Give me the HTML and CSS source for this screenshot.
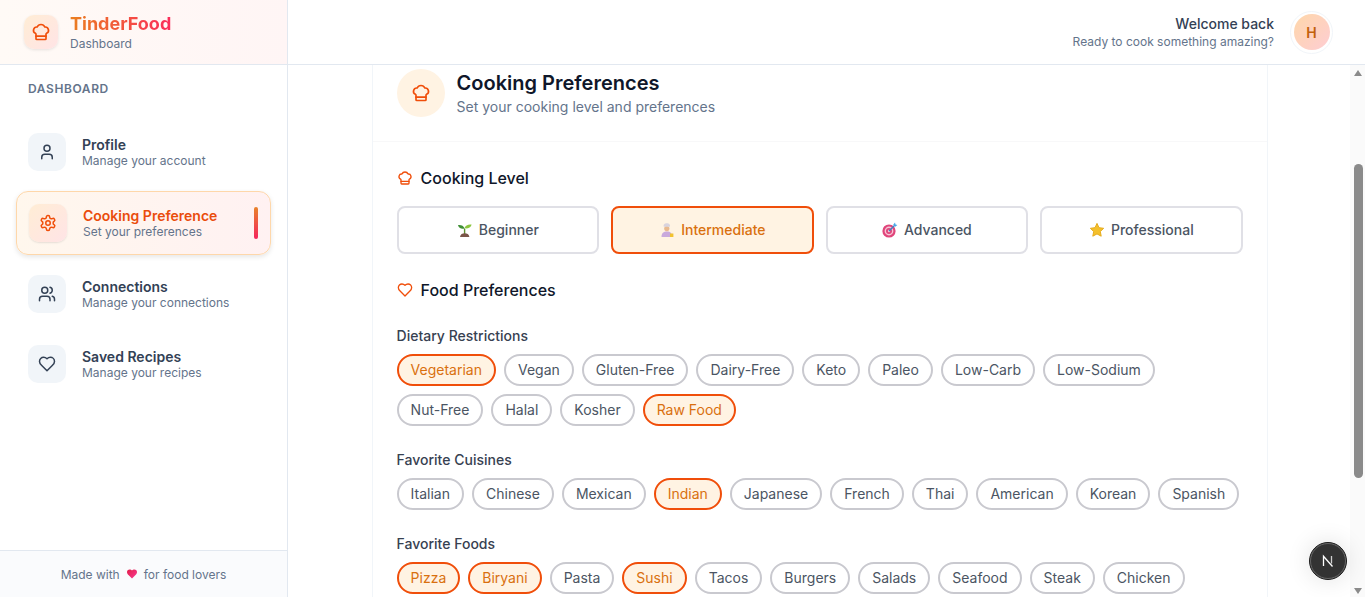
FILE: index.html
```html
<!DOCTYPE html>
<html lang="en">
<head>
<meta charset="utf-8">
<title>TinderFood Dashboard</title>
<link rel="stylesheet" href="styles.css">
</head>
<body>
<svg class="sprite" width="0" height="0" aria-hidden="true">
  <defs>
    <linearGradient id="g-heart" x1="0" y1="0" x2="1" y2="1"><stop offset="0" stop-color="#e11d48"/><stop offset="1" stop-color="#fb3b95"/></linearGradient>
  </defs>
  <symbol id="i-hat" viewBox="0 0 24 24"><path d="M17 21a1 1 0 0 0 1-1v-5.35c0-.457.316-.844.727-1.041a4 4 0 0 0-2.134-7.589 5 5 0 0 0-9.186 0 4 4 0 0 0-2.134 7.588c.411.198.727.585.727 1.041V20a1 1 0 0 0 1 1Z"/><path d="M6 17h12"/></symbol>
  <symbol id="i-user" viewBox="0 0 24 24"><path d="M19 21v-2a4 4 0 0 0-4-4H9a4 4 0 0 0-4 4v2"/><circle cx="12" cy="7" r="4"/></symbol>
  <symbol id="i-users" viewBox="0 0 24 24"><path d="M16 21v-2a4 4 0 0 0-4-4H6a4 4 0 0 0-4 4v2"/><circle cx="9" cy="7" r="4"/><path d="M22 21v-2a4 4 0 0 0-3-3.87"/><path d="M16 3.13a4 4 0 0 1 0 7.75"/></symbol>
  <symbol id="i-heart" viewBox="0 0 24 24"><path d="M19 14c1.49-1.46 3-3.21 3-5.5A5.5 5.5 0 0 0 16.5 3c-1.76 0-3 .5-4.5 2-1.5-1.5-2.74-2-4.5-2A5.5 5.5 0 0 0 2 8.5c0 2.3 1.5 4.05 3 5.5l7 7Z"/></symbol>
  <symbol id="i-gear" viewBox="0 0 24 24"><path d="M12.22 2h-.44a2 2 0 0 0-2 2v.18a2 2 0 0 1-1 1.73l-.43.25a2 2 0 0 1-2 0l-.15-.08a2 2 0 0 0-2.73.73l-.22.38a2 2 0 0 0 .73 2.73l.15.1a2 2 0 0 1 1 1.72v.51a2 2 0 0 1-1 1.74l-.15.09a2 2 0 0 0-.73 2.73l.22.38a2 2 0 0 0 2.73.73l.15-.08a2 2 0 0 1 2 0l.43.25a2 2 0 0 1 1 1.73V20a2 2 0 0 0 2 2h.44a2 2 0 0 0 2-2v-.18a2 2 0 0 1 1-1.73l.43-.25a2 2 0 0 1 2 0l.15.08a2 2 0 0 0 2.73-.73l.22-.39a2 2 0 0 0-.73-2.73l-.15-.08a2 2 0 0 1-1-1.74v-.5a2 2 0 0 1 1-1.74l.15-.09a2 2 0 0 0 .73-2.73l-.22-.38a2 2 0 0 0-2.73-.73l-.15.08a2 2 0 0 1-2 0l-.43-.25a2 2 0 0 1-1-1.73V4a2 2 0 0 0-2-2z"/><circle cx="12" cy="12" r="3"/></symbol>
</svg>
<div class="app">
  <aside class="sidebar">
    <div class="brand">
      <div class="brand-icon"><svg class="ic ic-20 orange"><use href="#i-hat"/></svg></div>
      <div>
        <div class="brand-name">TinderFood</div>
        <div class="brand-sub">Dashboard</div>
      </div>
    </div>
    <div class="nav-title">DASHBOARD</div>
    <nav class="nav">
      <a class="nav-item">
        <span class="nav-icon"><svg class="ic ic-18 slate"><use href="#i-user"/></svg></span>
        <span class="nav-text"><b>Profile</b><small>Manage your account</small></span>
      </a>
      <a class="nav-item active">
        <span class="nav-icon"><svg class="ic ic-18 orange"><use href="#i-gear"/></svg></span>
        <span class="nav-text"><b>Cooking Preference</b><small>Set your preferences</small></span>
        <span class="nav-bar"></span>
      </a>
      <a class="nav-item">
        <span class="nav-icon"><svg class="ic ic-18 slate"><use href="#i-users"/></svg></span>
        <span class="nav-text"><b>Connections</b><small>Manage your connections</small></span>
      </a>
      <a class="nav-item">
        <span class="nav-icon"><svg class="ic ic-18 slate"><use href="#i-heart"/></svg></span>
        <span class="nav-text"><b>Saved Recipes</b><small>Manage your recipes</small></span>
      </a>
    </nav>
    <div class="side-foot">Made with <svg class="foot-heart" viewBox="0 0 24 24"><path fill="url(#g-heart)" d="M19 14c1.49-1.46 3-3.21 3-5.5A5.5 5.5 0 0 0 16.5 3c-1.76 0-3 .5-4.5 2-1.5-1.5-2.74-2-4.5-2A5.5 5.5 0 0 0 2 8.5c0 2.3 1.5 4.05 3 5.5l7 7Z"/></svg> for food lovers</div>
  </aside>
  <div class="right">
    <header class="topbar">
      <div class="welcome">
        <div class="welcome-1">Welcome back</div>
        <div class="welcome-2">Ready to cook something amazing?</div>
      </div>
      <div class="avatar"><span>H</span></div>
    </header>
    <div class="content">
      <main class="main">
        <section class="card">
          <div class="card-head">
            <div class="head-icon"><svg class="ic ic-20 orange"><use href="#i-hat"/></svg></div>
            <div>
              <h1>Cooking Preferences</h1>
              <p>Set your cooking level and preferences</p>
            </div>
          </div>
          <div class="card-body">
            <h2><svg class="ic ic-16 orange"><use href="#i-hat"/></svg>Cooking Level</h2>
            <div class="levels">
              <button class="level">
                <svg class="emoji" viewBox="0 0 16 16"><path d="M7.6 13V6.5" stroke="#5d8f2f" stroke-width="1.4" fill="none"/><path d="M7.6 6.5C6.6 3.6 4 2.6 1 3c.4 2.8 3.4 4.6 6.6 3.5z" fill="#3f8f35"/><path d="M7.6 6C8.4 3.4 11 2.2 14.6 2.6c-.5 3-3.6 4.6-7 3.4z" fill="#8cc63f"/><path d="M3 15c.4-2.8 2.4-3.8 4.700-3.800s4.300 1 4.700 3.800z" fill="#7a5548"/></svg>
                Beginner
              </button>
              <button class="level on">
                <svg class="emoji" viewBox="0 0 16 16"><path d="M2.5 15c0-4 2-5.5 5.500-5.500S13 11 13 15z" fill="#c9a9dc"/><circle cx="7.800" cy="6.600" r="2.600" fill="#e9b98f"/><path d="M4.800 4.800C4 2.600 5.600 1.200 7.800 1.200s3.800 1.400 3 3.600z" fill="#d9d3de"/><rect x="11" y="11.500" width="3.400" height="3.500" fill="#f2c230"/></svg>
                Intermediate
              </button>
              <button class="level">
                <svg class="emoji" viewBox="0 0 16 16"><circle cx="7" cy="9" r="6.600" fill="#e0457b"/><circle cx="7" cy="9" r="4.400" fill="#f7c6d6"/><circle cx="7" cy="9" r="3" fill="#e0457b"/><circle cx="7" cy="9" r="1.200" fill="#f7c6d6"/><path d="M7 9l6-6" stroke="#3b82c4" stroke-width="1.300"/><path d="M11.200 2.800L13 .6l.5 1.900 1.900.5-2.200 1.800z" fill="#4aa8e8"/></svg>
                Advanced
              </button>
              <button class="level">
                <svg class="emoji" viewBox="0 0 16 16"><path d="M8 1.400l2 4.300 4.700.6-3.400 3.200.9 4.700L8 11.900l-4.200 2.300.9-4.700L1.300 6.300 6 5.700z" fill="#f4c02c" stroke="#e6ac1e" stroke-width="1" stroke-linejoin="round"/></svg>
                Professional
              </button>
            </div>
            <h2 class="food"><svg class="ic ic-16 orange"><use href="#i-heart"/></svg>Food Preferences</h2>
            <h3>Dietary Restrictions</h3>
            <div class="pills">
              <span class="pill on">Vegetarian</span><span class="pill">Vegan</span><span class="pill">Gluten-Free</span><span class="pill">Dairy-Free</span><span class="pill">Keto</span><span class="pill">Paleo</span><span class="pill">Low-Carb</span><span class="pill">Low-Sodium</span><span class="pill">Nut-Free</span><span class="pill">Halal</span><span class="pill">Kosher</span><span class="pill on">Raw Food</span>
            </div>
            <h3>Favorite Cuisines</h3>
            <div class="pills">
              <span class="pill">Italian</span><span class="pill">Chinese</span><span class="pill">Mexican</span><span class="pill on">Indian</span><span class="pill">Japanese</span><span class="pill">French</span><span class="pill">Thai</span><span class="pill">American</span><span class="pill">Korean</span><span class="pill">Spanish</span>
            </div>
            <h3>Favorite Foods</h3>
            <div class="pills">
              <span class="pill on">Pizza</span><span class="pill on">Biryani</span><span class="pill">Pasta</span><span class="pill on">Sushi</span><span class="pill">Tacos</span><span class="pill">Burgers</span><span class="pill">Salads</span><span class="pill">Seafood</span><span class="pill">Steak</span><span class="pill">Chicken</span>
            </div>
          </div>
        </section>
      </main>
      <div class="scrollbar" aria-hidden="true">
        <span class="arrow-up"></span>
        <span class="thumb"></span>
        <span class="arrow-down"></span>
      </div>
    </div>
  </div>
</div>
<button class="next-badge" aria-label="Next.js dev tools">
  <svg viewBox="0 0 16 16" width="16" height="16"><path d="M3.500 13V3.200L12.500 13.500" fill="none" stroke="#fff" stroke-width="1.300"/><path d="M11.500 3v7.500" fill="none" stroke="#cfcfcf" stroke-width="1.300"/></svg>
</button>
</body>
</html>
```

FILE: styles.css
```css
* { box-sizing: border-box; }
html, body { margin: 0; height: 100%; overflow: hidden; }
body { font-family: Inter, "Liberation Sans", sans-serif; color: #0f172a; background: #fff; }
.sprite { position: absolute; }
.ic { fill: none; stroke: currentColor; stroke-width: 2; stroke-linecap: round; stroke-linejoin: round; display: block; flex: none; }
.ic-16 { width: 16px; height: 16px; }
.ic-18 { width: 18px; height: 18px; }
.ic-20 { width: 20px; height: 20px; }
.orange { color: #f04e0a; }
.slate { color: #334155; }

.app { display: flex; height: 597px; }
.sidebar { width: 288px; flex: none; display: flex; flex-direction: column; border-right: 1px solid #e2e8f0; background: #fff; }
.brand { height: 65px; display: flex; align-items: center; gap: 12px; padding: 0 24px; border-bottom: 1px solid #e2e8f0; background: linear-gradient(90deg, #fffaf6, #fff5f5); flex: none; }
.brand-icon { width: 34px; height: 34px; border-radius: 10px; background: linear-gradient(135deg, #ffedd5, #ffe4e6); display: flex; align-items: center; justify-content: center; box-shadow: 0 1px 3px rgba(0,0,0,.1); }
.brand-name { font-size: 18px; font-weight: 700; line-height: 24px; background: linear-gradient(90deg, #ea7f1f, #fb2c5a); -webkit-background-clip: text; background-clip: text; color: transparent; width: max-content; }
.brand-sub { font-size: 12px; line-height: 16px; color: #64748b; }
.nav-title { font-size: 12px; font-weight: 600; letter-spacing: .6px; color: #64748b; line-height: 16px; padding: 16px 28px 0; }
.nav { display: flex; flex-direction: column; gap: 8px; padding: 24px 16px 0; flex: 1; }
.nav-item { height: 62px; display: flex; align-items: center; gap: 16px; padding: 0 12px; border-radius: 12px; }
.nav-icon { width: 38px; height: 38px; border-radius: 10px; background: #f1f5f9; display: flex; align-items: center; justify-content: center; flex: none; }
.nav-text { display: flex; flex-direction: column; flex: 1; padding-top: 2px; }
.nav-text b { font-size: 14px; font-weight: 600; line-height: 16px; color: #334155; }
.nav-text small { font-size: 12px; line-height: 16px; color: #64748b; }
.nav-item.active { height: 64px; background: linear-gradient(90deg, #fff7ed, #fff1f2); border: 1px solid #fed7aa; box-shadow: 0 2px 5px rgba(0,0,0,.1); }
.nav-item.active .nav-icon { background: linear-gradient(135deg, #ffedd5, #ffe4e6); box-shadow: 0 1px 2px rgba(0,0,0,.1); }
.nav-item.active b { color: #ea4c0c; }
.nav-bar { width: 4px; height: 32px; border-radius: 2px; background: linear-gradient(180deg, #e8832a, #f5245e); }
.side-foot { height: 47px; flex: none; display: flex; align-items: center; justify-content: center; gap: 6px; font-size: 12px; color: #64748b; border-top: 1px solid #e2e8f0; background: #fafbfd; }
.foot-heart { width: 12px; height: 12px; display: block; }

.right { flex: 1; min-width: 0; display: flex; flex-direction: column; }
.topbar { height: 65px; flex: none; display: flex; justify-content: flex-end; align-items: center; gap: 16px; padding: 0 32px 0 0; border-bottom: 1px solid #e2e8f0; background: #fff; }
.welcome { text-align: right; }
.welcome-1 { font-size: 14px; font-weight: 500; line-height: 20px; color: #334155; }
.welcome-2 { font-size: 12px; line-height: 16px; color: #64748b; }
.avatar { width: 43px; height: 43px; border-radius: 50%; border: 1px solid #f1f5f9; display: flex; align-items: center; justify-content: center; }
.avatar span { width: 36px; height: 36px; border-radius: 50%; background: linear-gradient(135deg, #fed7aa, #fecdd3); color: #c2610c; font-size: 14px; font-weight: 600; display: flex; align-items: center; justify-content: center; }

.content { flex: 1; min-height: 0; display: flex; }
.main { flex: 1; min-width: 0; overflow: hidden; background: #fff; padding-left: 83.6px; }
.scrollbar { width: 15px; flex: none; background: #fafafa; display: flex; flex-direction: column; align-items: center; padding-left: 1px; }
.arrow-up { width: 0; height: 0; margin-top: 5px; border-left: 4.5px solid transparent; border-right: 4.5px solid transparent; border-bottom: 6px solid #8a8a8a; }
.thumb { width: 9px; height: 314px; margin-top: 88px; border-radius: 5px; background: #8a8a8a; }
.arrow-down { width: 0; height: 0; margin-top: auto; margin-bottom: 3px; border-left: 4.5px solid transparent; border-right: 4.5px solid transparent; border-top: 6px solid #8a8a8a; }

.card { margin-top: -21px; border: 1px solid #f1f5f9; border-radius: 16px; background: #fff; width: 896px; }
.card-head { display: flex; gap: 12px; align-items: flex-start; padding: 24px; border-bottom: 1px solid #f8f8f9; }
.head-icon { width: 48px; height: 48px; border-radius: 50%; background: #fff3e3; display: flex; align-items: center; justify-content: center; }
h1 { font-size: 20px; line-height: 28px; font-weight: 600; margin: 0; color: #0f172a; }
.card-head p { font-size: 14px; line-height: 20px; margin: 0; color: #64748b; }
.card-body { padding: 24px; }
h2 { display: flex; align-items: center; gap: 8px; font-size: 16px; line-height: 24px; font-weight: 500; margin: 0; color: #0f172a; }
.levels { display: grid; grid-template-columns: repeat(4, 1fr); gap: 12px; margin-top: 16px; }
.level { height: 48px; border: 2px solid #e0e0e6; border-radius: 8px; background: #fff; font: 500 14px Inter, sans-serif; color: #4b5563; display: flex; align-items: center; justify-content: center; gap: 6px; padding: 0 0 1px; }
.level.on { border-color: #f04e0a; background: #fff3e3; color: #d9700f; }
.emoji { width: 16px; height: 16px; display: block; flex: none; margin-top: 1px; }
.food { margin-top: 24px; }
h3 { font-size: 14px; font-weight: 500; line-height: 20px; margin: 24px 0 8px; color: #374151; }
.pills { display: flex; flex-wrap: wrap; gap: 8px; }
.pill { height: 32px; padding: 0 12px 1px; display: flex; align-items: center; border: 2px solid #c9c9cf; border-radius: 16px; font-size: 14px; color: #4b5563; background: #fff; }
.pill.on { border-color: #f04e0a; background: #fff3e3; color: #d9700f; }

.next-badge { position: fixed; left: 1309px; top: 542px; width: 38px; height: 38px; border-radius: 50%; background: #333; border: 1px solid #1c1c1c; outline: 1px solid #666; outline-offset: -2px; display: flex; align-items: center; justify-content: center; box-shadow: 0 0 24px rgba(0,0,0,.12); padding: 0; }
```
